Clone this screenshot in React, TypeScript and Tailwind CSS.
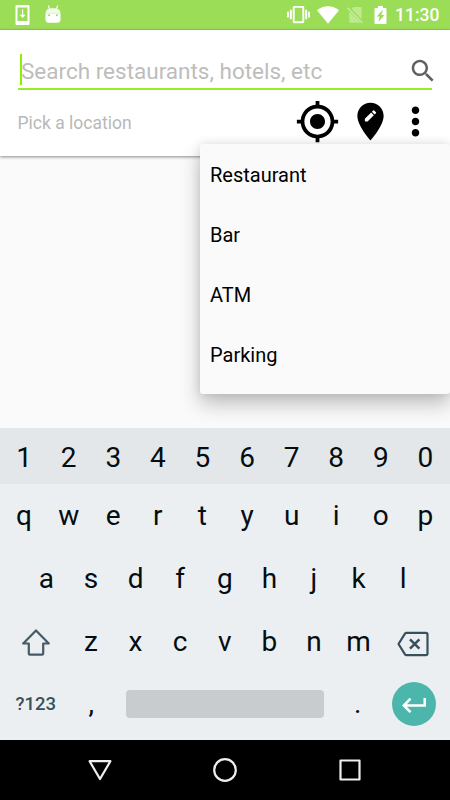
import { ReactNode } from 'react'
import clsx from 'clsx'

const CATEGORIES = ['Restaurant', 'Bar', 'ATM', 'Parking']

function Icon({ d, className }: { d: string; className?: string }) {
  return (
    <svg viewBox="0 0 24 24" fill="currentColor" className={clsx('block shrink-0', className)}>
      <path d={d} />
    </svg>
  )
}

function StatusBar() {
  return (
    <div className="flex h-[30px] shrink-0 items-center border-b border-[#8fd542] bg-[#9bdd57] pr-[10px] pl-[15px] text-white">
      <svg viewBox="0 0 15 20" className="block h-5 w-[15px]">
        <path fill="currentColor" fillRule="evenodd" d="M1.500 0h12q1 0 1 1v18q0 1-1 1h-12q-1 0-1-1V1q0-1 1-1zM2.500 2.500v13.600h10V2.500z" />
        <path fill="currentColor" d="M7 4.500h1.200v5.300h2.300l-2.900 3.200L4.700 9.800H7z" />
      </svg>
      <svg viewBox="0 0 16 19" className="ml-[15px] block h-[19px] w-4">
        <path fill="currentColor" fillRule="evenodd" d="M.5 8.400h15v6q0 3.300-3.400 3.300H4q-3.500 0-3.500-3.300zM4.100 9.200a1 1 0 100 2 1 1 0 000-2zm7.800 0a1 1 0 100 2 1 1 0 000-2z" />
        <path fill="currentColor" opacity=".85" d="M.5 8.400Q1 3.600 5 3.200h6q4 .4 4.500 5.200z" />
        <path stroke="currentColor" strokeWidth="1.100" fill="none" d="M3.200.5l1.300 3M12.800.5l-1.300 3" />
      </svg>
      <div className="ml-auto flex items-center">
        <Icon
          className="size-[23px]"
          d="M0 15h2V9H0v6zm3 2h2V7H3v10zm19-8v6h2V9h-2zm-3 8h2V7h-2v10zM16.5 3h-9C6.67 3 6 3.67 6 4.5v15c0 .83.67 1.5 1.5 1.5h9c.83 0 1.5-.67 1.5-1.5v-15c0-.83-.67-1.5-1.5-1.5zM16 19H8V5h8v14z"
        />
        <svg viewBox="0 0 22 18" className="ml-[7px] block h-[18px] w-[22px]">
          <path fill="currentColor" d="M0 4.200Q4.800.3 11 .3T22 4.200L11 17.700z" />
        </svg>
        <svg viewBox="0 0 16 18" className="ml-2 block h-[18px] w-4">
          <path fill="currentColor" opacity=".35" d="M6.300 1H13.500q1.200 0 1.200 1.200v11L4.600 3.100zM2.200 5.200l11.500 11.600H3.200q-1 0-1-1z" />
          <path stroke="currentColor" opacity=".45" strokeWidth="1.300" d="M.5 1.700l15 15.300" />
        </svg>
        <svg viewBox="0 0 13 18" className="ml-[11px] block h-[18px] w-[13px]">
          <path fill="currentColor" fillRule="evenodd" d="M4 0h5v2h2.500q1 0 1 1v14q0 1-1 1h-10q-1 0-1-1V3q0-1 1-1H4zM9 3.600L2.800 10.400h2.900L4.500 15.900l6-7H7.400z" />
        </svg>
        <span className="ml-[8px] w-[45px] pt-[3px] text-[17.5px] leading-none font-medium">11:30</span>
      </div>
    </div>
  )
}

function SearchHeader() {
  return (
    <header className="relative h-[126px] shrink-0 bg-white shadow-[0_1px_3px_rgba(0,0,0,0.45)]">
      <div className="mx-[18px] flex h-[60px] items-end border-b-2 border-[#98ee25]">
        <div className="mb-[3px] ml-[2px] flex h-[31px] flex-1 items-center border-l-2 border-[#8cf000]">
          <span className="-ml-px pt-[3px] text-[22.5px] leading-none whitespace-nowrap text-[#bdbdbd]">Search restaurants, hotels, etc</span>
        </div>
        <Icon
          className="-mr-[5.5px] mb-[2px] size-[30px] text-[#606060]"
          d="M15.5 14h-.79l-.28-.27C15.41 12.59 16 11.11 16 9.5 16 5.91 13.09 3 9.5 3S3 5.91 3 9.5 5.91 16 9.5 16c1.61 0 3.09-.59 4.23-1.57l.27.28v.79l5 4.99L20.49 19l-4.99-5zm-6 0C7.01 14 5 11.99 5 9.500S7.010 5 9.500 5 14 7.010 14 9.500 11.990 14 9.500 14z"
        />
      </div>
      <div className="flex h-[63px] items-center pr-[12.5px] pl-[17.5px] text-black">
        <span className="flex-1 pt-[3px] text-[17.5px] text-[#b8b8b8]">Pick a location</span>
        <Icon
          className="mr-[7.5px] size-[45px]"
          d="M12 8c-2.21 0-4 1.79-4 4s1.79 4 4 4 4-1.79 4-4-1.79-4-4-4zm8.94 3c-.46-4.17-3.77-7.48-7.94-7.94V1h-2v2.06C6.83 3.52 3.52 6.83 3.06 11H1v2h2.06c.46 4.17 3.77 7.48 7.94 7.94V23h2v-2.06c4.17-.46 7.48-3.77 7.94-7.94H23v-2h-2.06zM12 19c-3.87 0-7-3.13-7-7s3.13-7 7-7 7 3.13 7 7-3.13 7-7 7z"
        />
        <Icon
          className="size-[45px]"
          d="M12 2C8.14 2 5 5.14 5 9c0 5.25 7 13 7 13s7-7.75 7-13c0-3.86-3.14-7-7-7zm-1.56 10H9v-1.44l3.35-3.34 1.43 1.43L10.44 12zm4.45-4.45l-.7.7-1.44-1.44.7-.7c.15-.15.39-.15.54 0l.9.9c.15.15.15.39 0 .54z"
        />
        <Icon
          className="size-[45px]"
          d="M12 8c1.1 0 2-.9 2-2s-.9-2-2-2-2 .9-2 2 .9 2 2 2zm0 2c-1.1 0-2 .9-2 2s.9 2 2 2 2-.9 2-2-.9-2-2-2zm0 6c-1.1 0-2 .9-2 2s.9 2 2 2 2-.9 2-2-.9-2-2-2z"
        />
      </div>
    </header>
  )
}

function CategoryMenu() {
  return (
    <ul className="absolute top-[144px] right-0 h-[250px] w-[250px] rounded-[3px] bg-[#fafafa] shadow-[0_10px_20px_rgba(0,0,0,0.24),0_0_10px_rgba(0,0,0,0.1)]">
      {CATEGORIES.map((name) => (
        <li key={name} className="flex h-[60px] items-center pt-[2px] pl-[10px] text-[20px] text-black">
          {name}
        </li>
      ))}
    </ul>
  )
}

function Key({ children, className }: { children: ReactNode; className?: string }) {
  return <span className={clsx('flex shrink-0 items-center justify-center', className ?? 'w-[44.6px]')}>{children}</span>
}

function Letters({ keys }: { keys: string }) {
  return keys.split('').map((key) => <Key key={key}>{key}</Key>)
}

function Keyboard() {
  return (
    <div className="relative h-[312px] shrink-0 bg-[#eceff1] text-[28px] leading-none text-[#050d12]">
      <div className="flex h-14 justify-center bg-[#e3e7ea] pt-[3px] pr-[0.5px]">
        <Letters keys="1234567890" />
      </div>
      <div className="flex h-[63px] justify-center pr-[0.5px]">
        <Letters keys="qwertyuiop" />
      </div>
      <div className="flex h-[63px] justify-center pr-[0.5px]">
        <Letters keys="asdfghjkl" />
      </div>
      <div className="flex h-[63px] justify-center pr-[0.5px]">
        <Key className="w-[66.9px]">
          <svg viewBox="0 0 28 28" className="mt-[2px] ml-px block size-7" fill="none" stroke="#455a64" strokeWidth="2.200" strokeLinejoin="round">
            <path d="M14 1.500L1.200 14.500h5.600v10q0 1.200 1.200 1.200h12q1.200 0 1.200-1.200v-10h5.600z" />
          </svg>
        </Key>
        <Letters keys="zxcvbnm" />
        <Key className="w-[66.9px]">
          <svg viewBox="0 0 32 26" className="mt-[4px] mr-[2px] block h-[26px] w-8" fill="none" stroke="#37505b" strokeWidth="2.200" strokeLinejoin="round">
            <path d="M9.500 1.800h19.300q1.700 0 1.700 1.700v19q0 1.700-1.700 1.700H9.500Q8.600 24.200 8 23.300L1.500 13 8 2.700Q8.600 1.800 9.500 1.800z" />
            <path d="M13 8.300l9.400 9.400M22.400 8.300L13 17.700" strokeWidth="2.500" />
          </svg>
        </Key>
      </div>
      <div className="flex h-[61px] items-center pl-[2.5px]">
        <span className="w-[66.4px] pt-[2px] text-center text-[18.5px] font-medium text-[#37505b]">?123</span>
        <Key>,</Key>
        <div className="mr-[11.5px] ml-[12.5px] h-7 w-[198px] rounded-[4px] bg-[#c8cccf]" />
        <Key>.</Key>
        <div className="ml-[11.5px] flex size-11 items-center justify-center rounded-full bg-[#4db6ac]">
          <svg viewBox="0 0 24 16" className="mt-[2px] block h-4 w-6" fill="none" stroke="#fff" strokeWidth="2.500">
            <path d="M22.700 1v7.500H2M8.500 1.700L1.800 8.500l6.700 6.700" />
          </svg>
        </div>
      </div>
    </div>
  )
}

function NavBar() {
  return (
    <nav className="flex h-[60px] shrink-0 items-center justify-center gap-[101px] bg-black">
      <svg viewBox="0 0 24 24" className="block size-6" fill="none" stroke="#eee" strokeWidth="2.200" strokeLinejoin="round">
        <path d="M1.600 3.200h20.800L12 21z" />
      </svg>
      <svg viewBox="0 0 24 24" className="block size-6" fill="none" stroke="#eee" strokeWidth="2.200">
        <circle cx="12" cy="12" r="10.800" />
      </svg>
      <svg viewBox="0 0 24 24" className="block size-6" fill="none" stroke="#eee" strokeWidth="2.200" strokeLinejoin="round">
        <path d="M2.500 2.500h19v19h-19z" />
      </svg>
    </nav>
  )
}

export default function App() {
  return (
    <div className="relative flex h-[800px] w-[450px] flex-col overflow-hidden bg-[#fafafa] font-[Roboto,sans-serif]">
      <StatusBar />
      <SearchHeader />
      <main className="flex-1" />
      <CategoryMenu />
      <Keyboard />
      <NavBar />
    </div>
  )
}
